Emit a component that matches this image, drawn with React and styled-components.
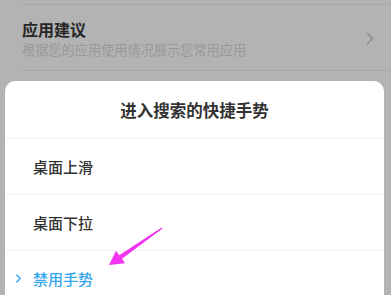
import styled, { createGlobalStyle } from "styled-components";

const GlobalStyle = createGlobalStyle`
	html, body {
		margin: 0;
		padding: 0;
		background: #b3b3b3;
		font-family: "Noto Sans CJK SC", "Noto Sans", sans-serif;
		overflow: hidden;
	}
`;

const options = [
	{ label: "桌面上滑", active: false },
	{ label: "桌面下拉", active: false },
	{ label: "禁用手势", active: true },
];

const Chevron = ({ color, width = 8, height = 13, strokeWidth = 1.5 }) => (
	<svg width={width} height={height} viewBox="0 0 8 13" fill="none">
		<path
			d="M1.5 1.5 L6.5 6.5 L1.5 11.5"
			stroke={color}
			strokeWidth={strokeWidth}
			strokeLinecap="round"
			strokeLinejoin="round"
		/>
	</svg>
);

const App = () => {
	return (
		<Page>
			<GlobalStyle />
			<Settings>
				<SettingRow>
					<SettingText>
						<SettingTitle>应用建议</SettingTitle>
						<SettingDesc>根据您的应用使用情况展示您常用应用</SettingDesc>
					</SettingText>
					<Chevron color="#8e8e8e" />
				</SettingRow>
			</Settings>

			<Sheet>
				<SheetTitle>进入搜索的快捷手势</SheetTitle>
				{options.map((item) => (
					<Option key={item.label} $active={item.active}>
						<Marker>
							{item.active && (
								<Chevron color="#35a6f0" width={7} height={9} strokeWidth={2} />
							)}
						</Marker>
						{item.label}
					</Option>
				))}
			</Sheet>

			{/* pointer drawn over the sheet */}
			<Arrow width="70" height="50" viewBox="0 0 70 50">
				<polygon
					points="61.7,7.4 62.5,8.6 22,38.8 25,43.2 9,45 16,30.8 19.2,35.2"
					fill="#f233f0"
				/>
			</Arrow>
		</Page>
	);
};

const Page = styled.div`
	position: relative;
	width: 391px;
	height: 295px;
	overflow: hidden;
	background: #b3b3b3;
`;

const Settings = styled.div`
	padding-top: 4px;
	padding-left: 22px;
`;

const SettingRow = styled.div`
	display: flex;
	align-items: center;
	justify-content: space-between;
	padding: 14px 17px 12px 0;
	border-top: 1px solid #a8a8a8;
	border-bottom: 1px solid #a8a8a8;
`;

const SettingText = styled.div`
	display: flex;
	flex-direction: column;
	gap: 2px;
`;

const SettingTitle = styled.div`
	font-size: 16px;
	line-height: 20px;
	font-weight: 600;
	color: #262626;
`;

const SettingDesc = styled.div`
	font-size: 13.2px;
	line-height: 17px;
	color: #999999;
`;

const Sheet = styled.div`
	margin: 10px 7px 0 5px;
	background: #ffffff;
	border-radius: 10px 10px 0 0;
	height: 230px;
`;

const SheetTitle = styled.div`
	height: 57px;
	display: flex;
	align-items: center;
	justify-content: center;
	font-size: 16.5px;
	font-weight: 700;
	color: #333333;
	border-bottom: 1px solid #f0f0f0;
`;

const Option = styled.div`
	height: 55px;
	display: flex;
	align-items: center;
	font-size: 15px;
	font-weight: 500;
	color: ${(props) => (props.$active ? "#35a6f0" : "#333333")};
	border-bottom: 1px solid #f0f0f0;

	&:last-child {
		border-bottom: none;
	}
`;

const Marker = styled.span`
	width: 28px;
	padding-left: 10px;
	box-sizing: border-box;
	display: flex;
	align-items: center;
`;

const Arrow = styled.svg`
	position: absolute;
	left: 100px;
	top: 220px;
`;

export default App;
